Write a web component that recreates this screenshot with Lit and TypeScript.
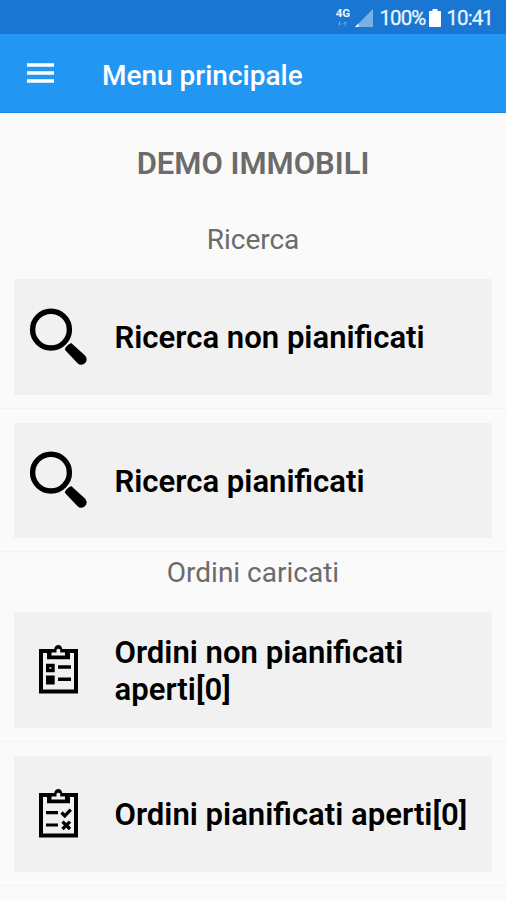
import { LitElement, html, svg, css } from "lit";
import { customElement, property } from "lit/decorators.js";

type IconName = "search" | "list" | "check";

const board = svg`
  <path d="M21 11H13V51.5H48V11H40" fill="none" stroke="#000" stroke-width="4"/>
  <path d="M19 9H26.3C26.8 6.4 28.2 5 30.3 5S33.8 6.4 34.3 9H42V19.3H19Z" fill="#000"/>
  <path d="M23.5 12.5H28.5V9.8Q30.3 7.8 32.2 9.8V12.5H37V15.4H23.5Z" fill="#f1f1f1"/>`;

const icons = {
  search: svg`
    <circle cx="23" cy="22.6" r="18.4" fill="none" stroke="#000" stroke-width="5.4"/>
    <path d="M36.8 42.8Q37.6 38.6 43.2 36L57 48.6A5.200 5.200 0 0 1 49.6 56.2Z" fill="#000"/>`,
  list: svg`${board}
    <path d="M19.7 25.5h5.3v5h-5.3z" fill="none" stroke="#000" stroke-width="3.4"/>
    <path d="M18 35.5h8.7v9H18zM30 25.3h13v3.4H30zM30 37.5h13v3.4H30z" fill="#000"/>`,
  check: svg`${board}
    <path d="M18 27h12v3.2H18zM18 39.4h12v3.2H18z" fill="#000"/>
    <path d="M33.5 28.5 36.8 31.8 42.8 25.6M34.5 37.6 42 45M42 37.6 34.5 45" fill="none" stroke="#000" stroke-width="3.3"/>`,
};

@customElement("status-bar")
class StatusBar extends LitElement {
  static styles = css`
    :host { display: flex; flex: none; height: 34px; box-sizing: border-box; padding: 2px 13px 0 0; justify-content: flex-end;
      align-items: center; background: #1976d2; color: #eaf4ff; font-size: 20.5px; }
    .net { width: 15px; height: 22px; margin-right: 5px; display: flex; flex-direction: column; align-items: center;
      font-size: 11.5px; font-weight: 700; line-height: 13px; }
    .arrows { display: block; margin-top: 1px; }
    .signal { width: 18px; height: 18px; margin-right: 6px; }
    .battery { width: 12px; height: 18px; margin: 0 5px 0 4px; }
    .time, .pct { letter-spacing: -0.9px; -webkit-text-stroke: 0.3px #eaf4ff; }
  `;
  render() {
    return html`
      <span class="net">4G
        <svg class="arrows" width="11" height="5" viewBox="0 0 11 5"><path d="M2.5 0v4M1 2.5 2.5 4 4 2.5M8 5V1M6.5 2.5 8 1 9.5 2.5" fill="none" stroke="#6aa8e6"/></svg>
      </span>
      <svg class="signal" viewBox="0 0 18 18"><path d="M18 0V18H0Z" fill="#78b0e8"/><path d="M0 18 3.5 14.5V18Z" fill="#fff"/></svg>
      <span class="pct">100%</span>
      <svg class="battery" viewBox="0 0 12 18"><path d="M3.5 0h5v2H11q1 0 1 1V17q0 1-1 1H1q-1 0-1-1V3q0-1 1-1h2.5z" fill="#fff"/></svg>
      <span class="time">10:41</span>`;
  }
}

@customElement("menu-item")
class MenuItem extends LitElement {
  @property() icon: IconName = "search";
  @property() label = "";
  static styles = css`
    :host { display: block; flex: none; height: 143.7px; box-sizing: border-box; padding: 14px 14px 0; border-bottom: 1px solid #f3f3f3; }
    .card { height: 115.5px; display: flex; align-items: center; padding: 0 14px; box-sizing: border-box; background: #f1f1f1; }
    .icon { width: 60px; height: 60px; flex: none; margin-right: 26.5px; }
    .label { color: #000; font-size: 31.1px; font-weight: 600; line-height: 36.4px; flex: 1; padding-top: 3px; }
  `;
  render() {
    return html`<div class="card">
      <svg class="icon" viewBox="0 0 60 60">${icons[this.icon]}</svg>
      <div class="label">${this.label}</div>
    </div>`;
  }
}

@customElement("app-root")
class AppRoot extends LitElement {
  static styles = css`
    :host { display: flex; flex-direction: column; height: 900px; overflow: hidden; background: #fafafa;
      font-family: Roboto, "Liberation Sans", sans-serif; }
    .bar, .title, .heading, .group { flex: none; }
    .bar { height: 79px; box-sizing: border-box; display: flex; align-items: center; padding: 4px 27px 0; background: #2196f3;
      color: #fff; font-size: 28px; font-weight: 500; border-bottom: 1px solid #1c86de; }
    .burger { width: 27px; height: 20px; margin: -4px 48px 0 0; }
    .title { height: 100px; box-sizing: border-box; padding-top: 33px; text-align: center; color: #6b6b6b;
      font-size: 31px; line-height: 36px; font-weight: 600; }
    .heading { text-align: center; color: #6b6b6b; font-size: 28px; line-height: 36px; box-sizing: border-box; }
    .first { height: 52px; padding-top: 9px; }
    .second { height: 46px; padding-top: 3px; }
    .group { display: flex; flex-direction: column; }
  `;
  render() {
    return html`
      <status-bar></status-bar>
      <header class="bar">
        <svg class="burger" viewBox="0 0 27 20"><path d="M0 2h27M0 10h27M0 18h27" stroke="#fff" stroke-width="3.4"/></svg>
        <span class="name">Menu principale</span>
      </header>
      <div class="title">DEMO IMMOBILI</div>
      <div class="heading first">Ricerca</div>
      <section class="group">
        <menu-item icon="search" label="Ricerca non pianificati"></menu-item>
        <menu-item icon="search" label="Ricerca pianificati"></menu-item>
      </section>
      <div class="heading second">Ordini caricati</div>
      <section class="group">
        <menu-item icon="list" label="Ordini non pianificati aperti[0]"></menu-item>
        <menu-item icon="check" label="Ordini pianificati aperti[0]"></menu-item>
      </section>`;
  }
}
